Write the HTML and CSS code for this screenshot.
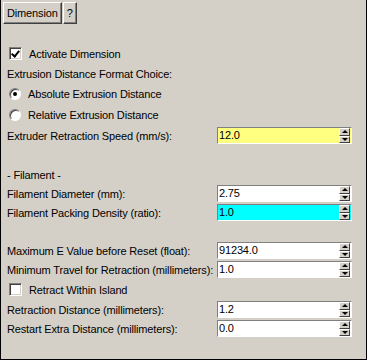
FILE: index.html
```html
<!DOCTYPE html>
<html>
  <head>
    <title>Dimension</title>
    <link rel="stylesheet" href="styles.css">
  </head>
  <body>
    <div class="window">
      <div class="tabs">
        <button class="tab">Dimension</button>
        <button class="tab">?</button>
      </div>
      <div class="panel">
        <label class="row check-row">
          <span class="box checked"></span>
          Activate Dimension
        </label>
        <div class="row text-row">Extrusion Distance Format Choice:</div>
        <label class="row radio-row">
          <span class="radio selected"></span>
          Absolute Extrusion Distance
        </label>
        <label class="row radio-row">
          <span class="radio"></span>
          Relative Extrusion Distance
        </label>
        <div class="row field-row first">
          <span class="label">Extruder Retraction Speed (mm/s):</span>
          <span class="spin yellow"><span class="value">12.0</span><span class="arrows"><i class="up"></i><i class="down"></i></span></span>
        </div>

        <div class="row header-row">- Filament -</div>
        <div class="row field-row">
          <span class="label">Filament Diameter (mm):</span>
          <span class="spin"><span class="value">2.75</span><span class="arrows"><i class="up"></i><i class="down"></i></span></span>
        </div>
        <div class="row field-row">
          <span class="label">Filament Packing Density (ratio):</span>
          <span class="spin cyan"><span class="value">1.0</span><span class="arrows"><i class="up"></i><i class="down"></i></span></span>
        </div>

        <div class="row field-row group">
          <span class="label">Maximum E Value before Reset (float):</span>
          <span class="spin"><span class="value">91234.0</span><span class="arrows"><i class="up"></i><i class="down"></i></span></span>
        </div>
        <div class="row field-row">
          <span class="label">Minimum Travel for Retraction (millimeters):</span>
          <span class="spin"><span class="value">1.0</span><span class="arrows"><i class="up"></i><i class="down"></i></span></span>
        </div>
        <label class="row check-row">
          <span class="box"></span>
          Retract Within Island
        </label>
        <div class="row field-row">
          <span class="label">Retraction Distance (millimeters):</span>
          <span class="spin"><span class="value">1.2</span><span class="arrows"><i class="up"></i><i class="down"></i></span></span>
        </div>
        <div class="row field-row">
          <span class="label">Restart Extra Distance (millimeters):</span>
          <span class="spin"><span class="value">0.0</span><span class="arrows"><i class="up"></i><i class="down"></i></span></span>
        </div>
      </div>
    </div>
  </body>
</html>
```

FILE: styles.css
```css
html, body {
  margin: 0;
  height: 100%;
}
body {
  background-color: #d4d0c8;
  font-family: "Liberation Sans", Arial, sans-serif;
  font-size: 11px;
  letter-spacing: -0.15px;
  color: #000;
}

.window {
  box-sizing: border-box;
  height: 360px;
  border: 1px solid #000;
  border-top: none;
}

.tabs {
  display: flex;
  padding: 2px 0 0 2px;
  height: 30px;
  box-sizing: border-box;
}

.tab {
  height: 22px;
  margin: 0 1px 0 0;
  padding: 0 3px;
  font: inherit;
  letter-spacing: inherit;
  color: #000;
  background-color: #d4d0c8;
  border: 1px solid;
  border-color: #fff #404040 #404040 #fff;
  box-shadow: inset -1px -1px 0 #808080;
}

.panel {
  padding: 13px 14px 0 6px;
}

.row {
  display: flex;
  align-items: center;
}

.check-row, .radio-row {
  height: 21px;
}

.text-row {
  height: 19px;
}

.header-row {
  height: 18px;
  margin-top: 21px;
}

.field-row {
  height: 19px;
}
.field-row.first {
  margin-top: 1px;
}
.field-row.group {
  margin-top: 19px;
}

.label {
  flex: 1;
  white-space: nowrap;
}

.box {
  width: 13px;
  height: 13px;
  box-sizing: border-box;
  margin: 0 7px 0 2px;
  background-color: #fff;
  border: 1px solid;
  border-color: #808080 #fff #fff #808080;
  box-shadow: inset 1px 1px 0 #404040, inset -1px -1px 0 #d4d0c8;
  position: relative;
}
.box.checked::after {
  content: "";
  position: absolute;
  left: 3px;
  top: 1px;
  width: 3px;
  height: 6px;
  border: solid #000;
  border-width: 0 2px 2px 0;
  transform: rotate(40deg);
}

.radio {
  width: 12px;
  height: 12px;
  box-sizing: border-box;
  margin: 0 7px 0 2px;
  border-radius: 50%;
  background-color: #fff;
  border: 1px solid;
  border-color: #808080 #fff #fff #808080;
  box-shadow: inset 1px 1px 0 #404040;
  position: relative;
}
.radio.selected::after {
  content: "";
  position: absolute;
  left: 3px;
  top: 3px;
  width: 4px;
  height: 4px;
  border-radius: 50%;
  background-color: #000;
}

.spin {
  width: 135px;
  height: 17px;
  box-sizing: border-box;
  display: flex;
  background-color: #fff;
  border: 1px solid;
  border-color: #808080 #fff #fff #808080;
}
.spin.yellow {
  background-color: #ffff80;
}
.spin.cyan {
  background-color: #00ffff;
}

.value {
  flex: 1;
  padding-left: 1px;
  line-height: 15px;
}

.arrows {
  width: 11px;
  margin-right: 1px;
  display: flex;
  flex-direction: column;
}
.arrows i {
  flex: 1;
  display: flex;
  align-items: center;
  justify-content: center;
  background-color: #d4d0c8;
  border: 1px solid;
  border-color: #fff #404040 #404040 #fff;
}
.arrows i::after {
  content: "";
  border-left: 3px solid transparent;
  border-right: 3px solid transparent;
}
.arrows .up::after {
  border-bottom: 3px solid #000;
}
.arrows .down::after {
  border-top: 3px solid #000;
}
```
